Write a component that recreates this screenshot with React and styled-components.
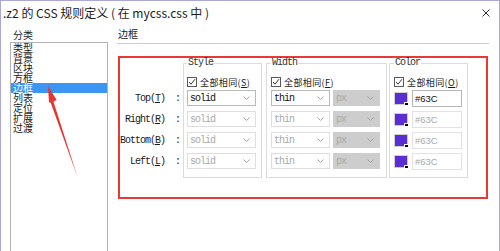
import styled, { createGlobalStyle } from 'styled-components'

const Global = createGlobalStyle`
html, body {
  margin: 0;
  padding: 0;
  background: #fff;
  overflow: hidden;
}
body {
  font-family: "Noto Sans CJK SC", "Noto Sans", sans-serif;
}
`

const mono = `"Liberation Mono", "Noto Sans CJK SC", monospace`

const Window = styled.div`
position: relative;
width: 500px;
height: 251px;
box-sizing: border-box;
border: 1px solid #aba7d4;
border-bottom: none;
background: #fff;
overflow: hidden;
display: flex;
flex-direction: column;
`

const TitleBar = styled.div`
height: 23px;
flex: none;
display: flex;
align-items: center;
justify-content: space-between;
padding: 0 9px 0 2px;
font-size: 12px;
color: #1b1b1b;
`

const Body = styled.div`
display: grid;
grid-template-columns: 98px 372px;
column-gap: 9px;
padding: 3px 0 0 9px;
`

const Caption = styled.div`
font-size: 10px;
line-height: 15px;
height: 15px;
padding-left: 3px;
color: #222;
`

const ListBox = styled.div`
box-sizing: border-box;
height: 230px;
border: 1px solid #b3b3b3;
`

// rows are squeezed tighter than the glyphs, like the original dialog
const ListItem = styled.div`
height: 10px;
line-height: 10px;
font-size: 10px;
padding-left: 2px;
color: ${p => (p.$active ? '#fff' : '#1a1a1a')};
background: ${p => (p.$active ? '#3a95f3' : 'transparent')};
white-space: nowrap;
`

const Heading = styled.div`
font-size: 10px;
line-height: 14px;
padding: 0 0 2px 1px;
border-bottom: 1px solid #cdcdcd;
color: #222;
`

const RedBox = styled.div`
box-sizing: border-box;
width: 370px;
height: 143px;
margin: 12px 0 0 1px;
border: 2px solid #e53a35;
display: flex;
align-items: flex-start;
`

const LabelColumn = styled.div`
width: 63px;
flex: none;
padding-top: 32px;
display: flex;
flex-direction: column;
gap: 5px;
`

const SideLabel = styled.div`
height: 16px;
display: flex;
align-items: center;
justify-content: flex-end;
padding-right: 3px;
font-family: ${mono};
font-size: 10px;
letter-spacing: -1px;
color: #1a1a1a;
white-space: pre;
`

const Group = styled.fieldset`
box-sizing: border-box;
width: ${p => p.$w}px;
margin: 0 0 0 ${p => p.$ml}px;
padding: 8px 0 8px ${p => p.$pl}px;
border: 1px solid #dcdcdc;
min-width: 0;
flex: none;
`

const Legend = styled.legend`
padding: 0 1px;
font-family: ${mono};
font-size: 10px;
line-height: 10px;
letter-spacing: -1px;
color: #333;
`

const Stack = styled.div`
display: flex;
flex-direction: column;
gap: 5px;
`

const CheckRow = styled.label`
height: 12px;
margin-bottom: -3px;
display: flex;
align-items: center;
gap: 3px;
font-size: 9px;
letter-spacing: 0.4px;
color: #1a1a1a;
white-space: nowrap;
`

const Box = styled.span`
box-sizing: border-box;
width: 10px;
height: 10px;
border: 1px solid #5a5a5a;
background: #fff;
display: flex;
align-items: center;
justify-content: center;
`

const Row = styled.div`
height: 16px;
display: flex;
align-items: center;
gap: ${p => p.$gap}px;
`

const Select = styled.div`
box-sizing: border-box;
width: ${p => p.$w}px;
height: 16px;
display: flex;
align-items: center;
justify-content: space-between;
padding: 0 5px 0 2px;
border: 1px solid ${p => (p.$grey ? '#cdcdcd' : p.$on ? '#b9b9b9' : '#dedede')};
background: ${p => (p.$grey ? '#cdcdcd' : '#fff')};
font-family: ${mono};
font-size: 10px;
letter-spacing: -1px;
color: ${p => (p.$on ? '#111' : '#a9a9a9')};
`

const Swatch = styled.span`
position: relative;
box-sizing: border-box;
width: 14px;
height: 13px;
background: #5a2ed3;
border: 1px solid #d0d0d0;

&::after {
  content: '';
  position: absolute;
  right: -1px;
  bottom: -1px;
  width: 3px;
  height: 2px;
  background: #000;
  border-left: 1px solid #fff;
  border-top: 1px solid #fff;
}
`

const HexInput = styled.div`
box-sizing: border-box;
width: 50px;
height: 17px;
padding-left: 2px;
display: flex;
align-items: center;
border: 1px solid ${p => (p.$on ? '#b5b5b5' : '#e2e2e2')};
font-family: "Liberation Sans", sans-serif;
font-size: 9.5px;
color: ${p => (p.$on ? '#111' : '#a9a9a9')};
`

const Arrow = styled.svg`
position: absolute;
left: 39px;
top: 79px;
width: 42px;
height: 100px;
pointer-events: none;
`

function Chevron() {
  return (
    <svg width="7" height="4" viewBox="0 0 7 4">
      <polyline points="0.5,0.5 3.5,3.5 6.5,0.5" fill="none" stroke="#a5a5a5" strokeWidth="1" />
    </svg>
  )
}

function Check({ text, k }) {
  return (
    <CheckRow>
      <Box>
        <svg width="8" height="8" viewBox="0 0 8 8">
          <polyline points="1,4 3,6.2 7,1.2" fill="none" stroke="#333" strokeWidth="1" />
        </svg>
      </Box>
      <span>{text}(<u>{k}</u>)</span>
    </CheckRow>
  )
}

const items = ['类型', '背景', '区块', '方框', '边框', '列表', '定位', '扩展', '过渡']
const sides = [
  { name: 'Top', key: 'T' },
  { name: 'Right', key: 'R' },
  { name: 'Bottom', key: 'B' },
  { name: 'Left', key: 'L' },
]

export default function App() {
  return (
    <Window>
      <Global />
      <TitleBar>
        <span>.z2 的 CSS 规则定义 ( 在 mycss.css 中 )</span>
        <svg width="8" height="8" viewBox="0 0 8 8">
          <path d="M0.5 0.5L7.5 7.5M7.5 0.5L0.5 7.5" stroke="#333" strokeWidth="1" />
        </svg>
      </TitleBar>
      <Body>
        <div>
          <Caption>分类</Caption>
          <ListBox>
            {items.map(t => (
              <ListItem key={t} $active={t === '边框'}>{t}</ListItem>
            ))}
          </ListBox>
        </div>
        <div>
          <Heading>边框</Heading>
          <RedBox>
            <LabelColumn>
              {sides.map(s => (
                <SideLabel key={s.name}>
                  {s.name}(<u>{s.key}</u>){'  :'}
                </SideLabel>
              ))}
            </LabelColumn>

            <Group $w={79} $ml={0} $pl={3}>
              <Legend>Style</Legend>
              <Stack>
                <Check text="全部相同" k="S" />
                {sides.map((s, i) => (
                  <Row key={s.name}>
                    <Select $w={69} $on={i === 0}>solid<Chevron /></Select>
                  </Row>
                ))}
              </Stack>
            </Group>

            <Group $w={121} $ml={4} $pl={4}>
              <Legend>Width</Legend>
              <Stack>
                <Check text="全部相同" k="F" />
                {sides.map((s, i) => (
                  <Row key={s.name} $gap={3}>
                    <Select $w={59} $on={i === 0}>thin<Chevron /></Select>
                    <Select $w={47} $grey>px<Chevron /></Select>
                  </Row>
                ))}
              </Stack>
            </Group>

            <Group $w={79} $ml={2} $pl={4}>
              <Legend>Color</Legend>
              <Stack>
                <Check text="全部相同" k="O" />
                {sides.map((s, i) => (
                  <Row key={s.name} $gap={4}>
                    <Swatch />
                    <HexInput $on={i === 0}>#63C</HexInput>
                  </Row>
                ))}
              </Stack>
            </Group>
          </RedBox>
        </div>
      </Body>
      <Arrow viewBox="40 80 42 100">
        <polygon
          points="48,86 56.7,100 53.4,101.5 77.5,177 50.6,102.5 49,102.5"
          fill="#e8342f"
        />
      </Arrow>
    </Window>
  )
}
